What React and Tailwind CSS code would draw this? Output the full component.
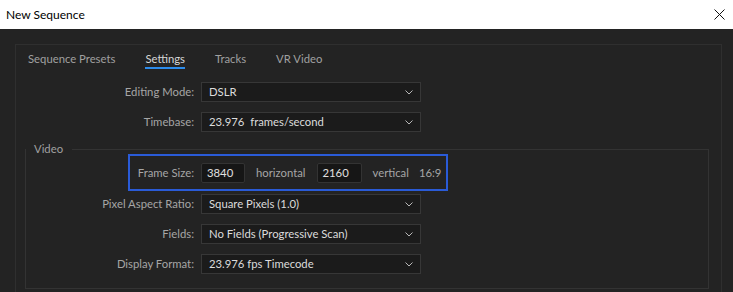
import React from 'react'

const font = { fontFamily: 'Lato, "Open Sans", sans-serif' }

const Chevron = () => (
  <svg width="8" height="5" viewBox="0 0 8 5" className="shrink-0">
    <polyline points="0.5,0.5 4,4 7.5,0.5" fill="none" stroke="#b8b8b8" strokeWidth="1" />
  </svg>
)

const Select = ({ value }) => (
  <div className="flex items-center justify-between w-[220px] h-[20px] bg-[#1b1b1b] border border-[#373737] pl-[7px] pr-[7px]">
    <span className="text-[#dcdcdc] whitespace-pre">{value}</span>
    <Chevron />
  </div>
)

const Row = ({ label, value, labelClass }) => (
  <div className="flex items-center gap-[7px]">
    <span className={`${labelClass} text-right text-[#a6a6a6] whitespace-nowrap`}>{label}</span>
    <Select value={value} />
  </div>
)

const NumberBox = ({ value, width }) => (
  <div className={`${width} h-[20px] bg-[#161616] border border-[#333] rounded-[2px] pl-[5px] flex items-center text-[#e0e0e0]`}>
    {value}
  </div>
)

const tabs = ['Sequence Presets', 'Settings', 'Tracks', 'VR Video']

export default function App() {
  return (
    <div className="w-[733px] h-[292px] overflow-hidden bg-[#232323] text-[11.3px] leading-[16px]" style={font}>
      <div className="h-[29px] bg-white flex items-center justify-between pl-[6px] pr-[8px]">
        <span className="text-black text-[12px]">New Sequence</span>
        <svg width="11" height="11" viewBox="0 0 11 11">
          <path d="M0.5 0.5 L10.5 10.5 M10.5 0.5 L0.5 10.5" stroke="#111" strokeWidth="1" />
        </svg>
      </div>

      <div className="pt-[15px] pl-[15px] pr-[11px]">
        <div className="border border-[#2f2f2f] pb-[40px]">
          <div className="flex gap-[30px] pl-[12px] pt-[6px]">
            {tabs.map(t => (
              <div
                key={t}
                className={
                  t === 'Settings'
                    ? 'border-b-2 border-[#2d8ceb] text-[#d6d6d6] whitespace-nowrap'
                    : 'border-b-2 border-transparent text-[#a0a0a0] whitespace-nowrap'
                }
              >
                {t}
              </div>
            ))}
          </div>

          <div className="mt-[13px] flex flex-col gap-[10px]">
            <Row label="Editing Mode:" value="DSLR" labelClass="w-[178px]" />
            <Row label="Timebase:" value="23.976  frames/second" labelClass="w-[178px]" />
          </div>

          <fieldset className="mt-[12px] ml-[9px] mr-[12px] border border-[#333] pb-[14px]">
            <legend className="pl-[8px] pr-[9px] leading-[10px] text-[#a0a0a0]">Video</legend>

            <div className="ml-[102px] w-[320px] h-[37px] border-2 border-[#2a5bd7] flex items-center pt-[1px] pl-[7px] text-[#a6a6a6] whitespace-nowrap">
              <span className="w-[57px] text-right">Frame Size:</span>
              <div className="ml-[7px]">
                <NumberBox value="3840" width="w-[44px]" />
              </div>
              <span className="ml-[11px]">horizontal</span>
              <div className="ml-[11px]">
                <NumberBox value="2160" width="w-[45px]" />
              </div>
              <span className="ml-[11px]">vertical</span>
              <span className="ml-[10px]">16:9</span>
            </div>

            <div className="mt-[3px] flex flex-col gap-[10px]">
              <Row label="Pixel Aspect Ratio:" value="Square Pixels (1.0)" labelClass="w-[168px]" />
              <Row label="Fields:" value="No Fields (Progressive Scan)" labelClass="w-[168px]" />
              <Row label="Display Format:" value="23.976 fps Timecode" labelClass="w-[168px]" />
            </div>
          </fieldset>
        </div>
      </div>
    </div>
  )
}
